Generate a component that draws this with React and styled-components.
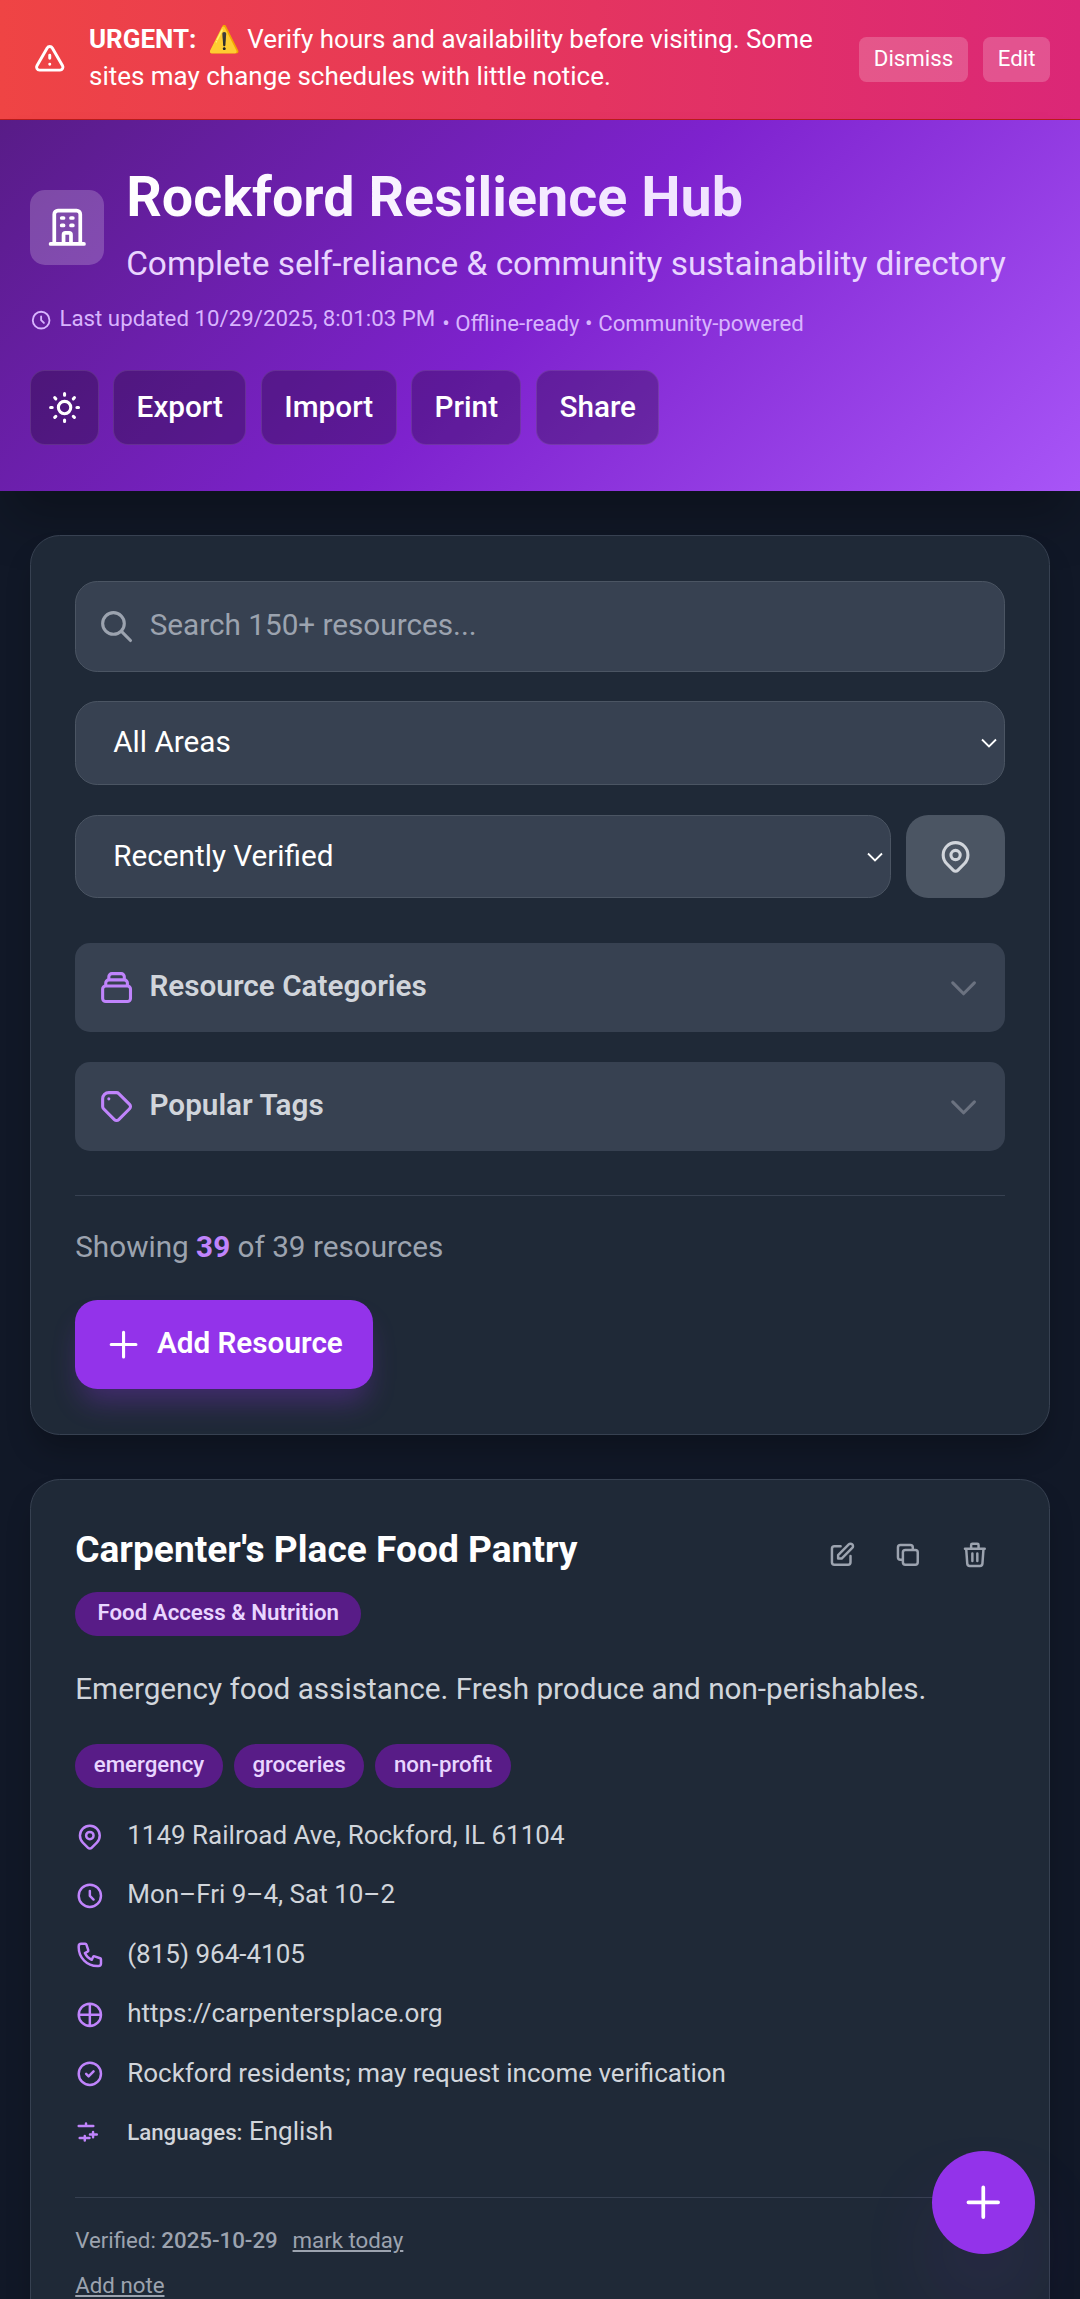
import React from "react";
import styled, { createGlobalStyle, css } from "styled-components";

const Global = createGlobalStyle`
  *, *::before, *::after { box-sizing: border-box; }
  body {
    margin: 0;
    height: 2299px;
    overflow: hidden;
    background: #111827;
    color: #fff;
    font-family: Roboto, "Noto Color Emoji", sans-serif;
    font-size: 29.7px;
    line-height: 1.5;
  }
  h1, h2, p { margin: 0; }
  button { font: inherit; color: inherit; border: 0; }
`;

const Svg = styled.svg`
  display: block;
  flex: none;
  width: ${(p) => p.$size || 37.125}px;
  height: ${(p) => p.$size || 37.125}px;
  fill: none;
  stroke: currentColor;
  stroke-width: 2;
  stroke-linecap: round;
  stroke-linejoin: round;
`;

const paths = {
  warning: "M12 9v2m0 4h.01m-6.938 4h13.856c1.54 0 2.502-1.667 1.732-3L13.732 4c-.77-1.333-2.694-1.333-3.464 0L3.34 16c-.77 1.333.192 3 1.732 3z",
  building: "M19 21V5a2 2 0 00-2-2H7a2 2 0 00-2 2v16m14 0h2m-2 0h-5m-9 0H3m2 0h5M9 7h1m-1 4h1m4-4h1m-1 4h1m-5 10v-5a1 1 0 011-1h2a1 1 0 011 1v5m-4 0h4",
  clock: "M12 8v4l3 3m6-3a9 9 0 11-18 0 9 9 0 0118 0z",
  sun: "M12 3v1m0 16v1m9-9h-1M4 12H3m15.364 6.364l-.707-.707M6.343 6.343l-.707-.707m12.728 0l-.707.707M6.343 17.657l-.707.707M16 12a4 4 0 11-8 0 4 4 0 018 0z",
  search: "M21 21l-6-6m2-5a7 7 0 11-14 0 7 7 0 0114 0z",
  pin: "M17.657 16.657L13.414 20.9a1.998 1.998 0 01-2.827 0l-4.244-4.243a8 8 0 1111.314 0zM15 11a3 3 0 11-6 0 3 3 0 016 0z",
  collection: "M19 11H5m14 0a2 2 0 012 2v6a2 2 0 01-2 2H5a2 2 0 01-2-2v-6a2 2 0 012-2m14 0V9a2 2 0 00-2-2M5 11V9a2 2 0 012-2m0 0V5a2 2 0 012-2h6a2 2 0 012 2v2M7 7h10",
  tag: "M7 7h.01M7 3h5c.512 0 1.024.195 1.414.586l7 7a2 2 0 010 2.828l-7 7a2 2 0 01-2.828 0l-7-7A1.994 1.994 0 013 12V7a4 4 0 014-4z",
  chevron: "M19 9l-7 7-7-7",
  plus: "M12 4v16m8-8H4",
  edit: "M11 5H6a2 2 0 00-2 2v11a2 2 0 002 2h11a2 2 0 002-2v-5m-1.414-9.414a2 2 0 112.828 2.828L11.828 15H9v-2.828l8.586-8.586z",
  copy: "M8 16H6a2 2 0 01-2-2V6a2 2 0 012-2h8a2 2 0 012 2v2m-6 12h8a2 2 0 002-2v-8a2 2 0 00-2-2h-8a2 2 0 00-2 2v8a2 2 0 002 2z",
  trash: "M19 7l-.867 12.142A2 2 0 0116.138 21H7.862a2 2 0 01-1.995-1.858L5 7m5 4v6m4-6v6m1-10V4a1 1 0 00-1-1h-4a1 1 0 00-1 1v3M4 7h16",
  phone: "M3 5a2 2 0 012-2h3.28a1 1 0 01.948.684l1.498 4.493a1 1 0 01-.502 1.21l-2.257 1.13a11.042 11.042 0 005.516 5.516l1.13-2.257a1 1 0 011.21-.502l4.493 1.498a1 1 0 01.684.949V19a2 2 0 01-2 2h-1C9.716 21 3 14.284 3 6V5z",
  globe: "M3 12h18M12 3v18M21 12a9 9 0 11-18 0 9 9 0 0118 0z",
  check: "M9 12l2 2 4-4m6 2a9 9 0 11-18 0 9 9 0 0118 0z",
  language: "M3 5.7h11.8M8.9 3.6v2M12.1 12.5h5.5M14.6 10.5v4.3M3.8 15.4h7.9M7.9 13.8v3.6",
};

const Icon = ({ name, size }) => (
  <Svg viewBox="0 0 24 24" $size={size} aria-hidden="true">
    <path d={paths[name]} />
  </Svg>
);

const Banner = styled.div`
  display: flex;
  align-items: center;
  gap: 22px;
  height: 120px;
  padding: 0 29.7px 0 31.5px;
  background: linear-gradient(90deg, #ef4444, #db2777);
  border-bottom: 1px solid #b91c1c;
`;
const BannerText = styled.p`
  flex: 1;
  margin-bottom: 4px;
  font-size: 25.98px;
  line-height: 37px;
`;
const BannerLabel = styled.strong`
  font-weight: 700;
  margin-right: 5.5px;
`;
const BannerActions = styled.div`
  display: flex;
  gap: 14.85px;
`;
const BannerButton = styled.button`
  padding: 6px 14.85px 9px;
  border-radius: 7.5px;
  background: rgba(255, 255, 255, 0.2);
  font-size: 22.275px;
  line-height: 30px;
`;

const Header = styled.header`
  height: 371px;
  padding: 45px 29.7px;
  background: linear-gradient(135deg, #581c87 0%, #7e22ce 50%, #a855f7 100%);
  box-shadow: 0 37px 47px -9px rgba(0, 0, 0, 0.25);
`;
const Brand = styled.div`
  display: flex;
  align-items: center;
  gap: 22.2px;
`;
const Logo = styled.div`
  display: grid;
  place-items: center;
  width: 74.25px;
  height: 75px;
  border-radius: 15px;
  background: rgba(255, 255, 255, 0.2);
`;
const Title = styled.h1`
  font-size: 55.7px;
  line-height: 64px;
  font-weight: 700;
  color: transparent;
  background: linear-gradient(90deg, #fff, #e9d5ff);
  background-clip: text;
  -webkit-background-clip: text;
`;
const Subtitle = styled.p`
  margin: 11px 0 3px;
  font-size: 33.4px;
  line-height: 47px;
  color: #e9d5ff;
`;
const Meta = styled.div`
  display: flex;
  align-items: center;
  gap: 7px;
  height: 35px;
  margin-top: 13px;
  font-size: 22.275px;
  line-height: 30px;
  color: #d8b4fe;
`;
const Updated = styled.span`
  display: flex;
  align-items: center;
  gap: 7.5px;
  margin-top: -5px;
`;
const ClockIcon = styled.span`
  display: flex;
  margin-top: 4px;
`;
const MetaNote = styled.span`
  margin-top: 5px;
`;
const Toolbar = styled.div`
  display: flex;
  gap: 14.85px;
  margin-top: 32px;
`;
const ToolButton = styled.button`
  height: 75px;
  padding: ${(p) => (p.$square ? "0 14.85px" : "0 22.275px 1px")};
  border: 1px solid rgba(255, 255, 255, 0.1);
  border-radius: 15px;
  background: rgba(0, 0, 0, 0.25);
  font-weight: 500;
`;

const Main = styled.main`
  display: flex;
  flex-direction: column;
  gap: 44px;
  padding: 44px 29.7px;
`;
const Card = styled.section`
  padding: 45px 44.55px;
  background: #1f2937;
  border: 1px solid #374151;
  border-radius: 29.7px;
  box-shadow: 0 18.75px 28px -5.6px rgba(0, 0, 0, 0.25);
  ${(p) => p.$h && css`height: ${p.$h}px;`}
`;
const Field = styled.div`
  display: flex;
  align-items: center;
  flex: 1;
  height: ${(p) => p.$h}px;
  padding: ${(p) => (p.$search ? "0 21.5px" : "0 6px 0 37px")};
  gap: 14.85px;
  border: 1px solid #4b5563;
  border-radius: 22.275px;
  background: #374151;
  color: ${(p) => (p.$search ? "#9ca3af" : "#fff")};
`;
const FieldText = styled.span`
  flex: 1;
  padding-bottom: ${(p) => p.$lift || 1}px;
`;
const FieldRow = styled.div`
  display: flex;
  gap: 14.85px;
  margin-top: ${(p) => p.$mt}px;
`;
const Arrow = styled.svg`
  width: 18px;
  height: 10px;
  fill: none;
  stroke: #fff;
  stroke-width: 1.8;
`;
const LocateButton = styled.button`
  display: grid;
  place-items: center;
  width: 99px;
  border-radius: 22.275px;
  background: #4b5563;
  color: #d1d5db;
`;
const Accordion = styled.button`
  display: flex;
  align-items: center;
  width: 100%;
  height: 89px;
  margin-top: ${(p) => p.$mt}px;
  padding: 0 22.275px;
  gap: 14.85px;
  border-radius: 15px;
  background: #374151;
  color: #c084fc;
  text-align: left;
`;
const AccordionLabel = styled.span`
  flex: 1;
  padding-bottom: 2.5px;
  font-weight: 600;
  color: #d1d5db;
`;
const Muted = styled.span`
  display: flex;
  color: #6b7280;
`;
const Rule = styled.hr`
  height: 1px;
  margin: ${(p) => p.$m}px 0 0;
  border: 0;
  background: #374151;
`;
const Count = styled.p`
  margin-top: 28px;
  line-height: 45px;
  color: #9ca3af;
`;
const CountValue = styled.b`
  font-weight: 700;
  color: #c084fc;
`;
const AddButton = styled.button`
  display: flex;
  align-items: center;
  height: 89px;
  width: 298px;
  margin-top: 31px;
  padding: 0 29.7px;
  gap: 14.85px;
  border-radius: 22.275px;
  background: #9333ea;
  box-shadow: 0 18.75px 28px -5.6px rgba(147, 51, 234, 0.3);
  font-weight: 600;
  white-space: nowrap;
`;
const AddLabel = styled.span`
  padding-bottom: 2.5px;
`;

const CardHead = styled.div`
  display: flex;
  justify-content: space-between;
  height: 60px;
`;
const CardTitle = styled.h2`
  font-size: 37.125px;
  line-height: 49px;
  font-weight: 700;
`;
const CardActions = styled.div`
  display: flex;
  gap: 7.4px;
`;
const IconButton = styled.button`
  display: grid;
  place-items: center;
  width: 59.4px;
  height: 59.4px;
  padding: 0;
  background: none;
  color: #9ca3af;
`;
const Pill = styled.span`
  height: 44px;
  padding: 0 ${(p) => p.$px}px;
  border-radius: 22px;
  background: #581c87;
  color: #e9d5ff;
  font-size: 22.275px;
  line-height: 40px;
  font-weight: ${(p) => p.$weight};
`;
const Category = styled.div`
  display: flex;
  margin-top: 7px;
`;
const Description = styled.p`
  margin-top: 28px;
  line-height: 49px;
  color: #d1d5db;
`;
const Tags = styled.div`
  display: flex;
  gap: 11.14px;
  margin-top: 31px;
`;
const Details = styled.div`
  display: grid;
  grid-auto-rows: 37px;
  gap: 22.4px;
  margin-top: 29px;
`;
const Detail = styled.div`
  display: flex;
  align-items: center;
  gap: 22.275px;
  font-size: 26px;
  line-height: 37px;
  color: #d1d5db;
`;
const DetailIcon = styled.span`
  display: flex;
  margin-top: 2px;
  color: #c084fc;
`;
const Small = styled.strong`
  font-size: 22.275px;
  font-weight: 500;
`;
const Foot = styled.div`
  display: flex;
  flex-direction: column;
  align-items: flex-start;
  gap: 13px;
  margin-top: 26px;
  font-size: 22.275px;
  line-height: 32px;
  color: #9ca3af;
`;
const LinkText = styled.a`
  text-decoration: underline;
  margin-left: ${(p) => p.$ml || 0}px;
`;
const Strong = styled.b`
  font-weight: 500;
`;
const Fab = styled.button`
  position: fixed;
  right: 44.75px;
  bottom: 44.75px;
  display: grid;
  place-items: center;
  width: 103.5px;
  height: 103.5px;
  padding: 0;
  border-radius: 50%;
  background: #9333ea;
  box-shadow: 0 47px 94px -22px rgba(147, 51, 234, 0.3);
`;

const Select = ({ label, height }) => (
  <Field $h={height}>
    <FieldText>{label}</FieldText>
    <Arrow viewBox="0 0 18 10"><path d="M2 1.5l7 7 7-7" /></Arrow>
  </Field>
);

const details = [
  ["pin", "1149 Railroad Ave, Rockford, IL 61104"],
  ["clock", "Mon–Fri 9–4, Sat 10–2"],
  ["phone", "(815) 964-4105"],
  ["globe", "https://carpentersplace.org"],
  ["check", "Rockford residents; may request income verification"],
];

export default function App() {
  return (
    <>
      <Global />
      <Banner>
        <Icon name="warning" size={35.5} />
        <BannerText>
          <BannerLabel>URGENT:</BannerLabel> ⚠️ Verify hours and availability before visiting. Some sites may change schedules with little notice.
        </BannerText>
        <BannerActions>
          <BannerButton>Dismiss</BannerButton>
          <BannerButton>Edit</BannerButton>
        </BannerActions>
      </Banner>
      <Header>
        <Brand>
          <Logo><Icon name="building" size={44.55} /></Logo>
          <div>
            <Title>Rockford Resilience Hub</Title>
            <Subtitle>Complete self-reliance &amp; community sustainability directory</Subtitle>
          </div>
        </Brand>
        <Meta>
          <Updated>
            <ClockIcon><Icon name="clock" size={22.275} /></ClockIcon>
            Last updated 10/29/2025, 8:01:03 PM
          </Updated>
          <MetaNote>• Offline-ready • Community-powered</MetaNote>
        </Meta>
        <Toolbar>
          <ToolButton $square><Icon name="sun" /></ToolButton>
          {["Export", "Import", "Print", "Share"].map((t) => <ToolButton key={t}>{t}</ToolButton>)}
        </Toolbar>
      </Header>
      <Main>
        <Card $h={900}>
          <Field $search $h={91}>
            <Icon name="search" />
            <FieldText $lift={2.5}>Search 150+ resources...</FieldText>
          </Field>
          <FieldRow $mt={29}><Select label="All Areas" height={84} /></FieldRow>
          <FieldRow $mt={30}>
            <Select label="Recently Verified" height={83} />
            <LocateButton><Icon name="pin" /></LocateButton>
          </FieldRow>
          <Accordion $mt={45}>
            <Icon name="collection" />
            <AccordionLabel>Resource Categories</AccordionLabel>
            <Muted><Icon name="chevron" /></Muted>
          </Accordion>
          <Accordion $mt={30}>
            <Icon name="tag" />
            <AccordionLabel>Popular Tags</AccordionLabel>
            <Muted><Icon name="chevron" /></Muted>
          </Accordion>
          <Rule $m={44} />
          <Count>Showing <CountValue>39</CountValue> of 39 resources</Count>
          <AddButton><Icon name="plus" /><AddLabel>Add Resource</AddLabel></AddButton>
        </Card>
        <Card $h={860}>
          <CardHead>
            <CardTitle>Carpenter's Place Food Pantry</CardTitle>
            <CardActions>
              {["edit", "copy", "trash"].map((n) => (
                <IconButton key={n}><Icon name={n} size={29.7} /></IconButton>
              ))}
            </CardActions>
          </CardHead>
          <Category><Pill $px={22.275} $weight={600}>Food Access &amp; Nutrition</Pill></Category>
          <Description>Emergency food assistance. Fresh produce and non-perishables.</Description>
          <Tags>
            {["emergency", "groceries", "non-profit"].map((t) => (
              <Pill key={t} $px={18.56} $weight={500}>{t}</Pill>
            ))}
          </Tags>
          <Details>
            {details.map(([icon, text]) => (
              <Detail key={icon}><DetailIcon><Icon name={icon} size={29.7} /></DetailIcon>{text}</Detail>
            ))}
            <Detail>
              <DetailIcon><Icon name="language" size={29.7} /></DetailIcon>
              <span><Small>Languages:</Small> English</span>
            </Detail>
          </Details>
          <Rule $m={46} />
          <Foot>
            <span>Verified: <Strong>2025-10-29</Strong><LinkText $ml={14.85}>mark today</LinkText></span>
            <LinkText>Add note</LinkText>
          </Foot>
        </Card>
      </Main>
      <Fab><Icon name="plus" size={44.55} /></Fab>
    </>
  );
}
